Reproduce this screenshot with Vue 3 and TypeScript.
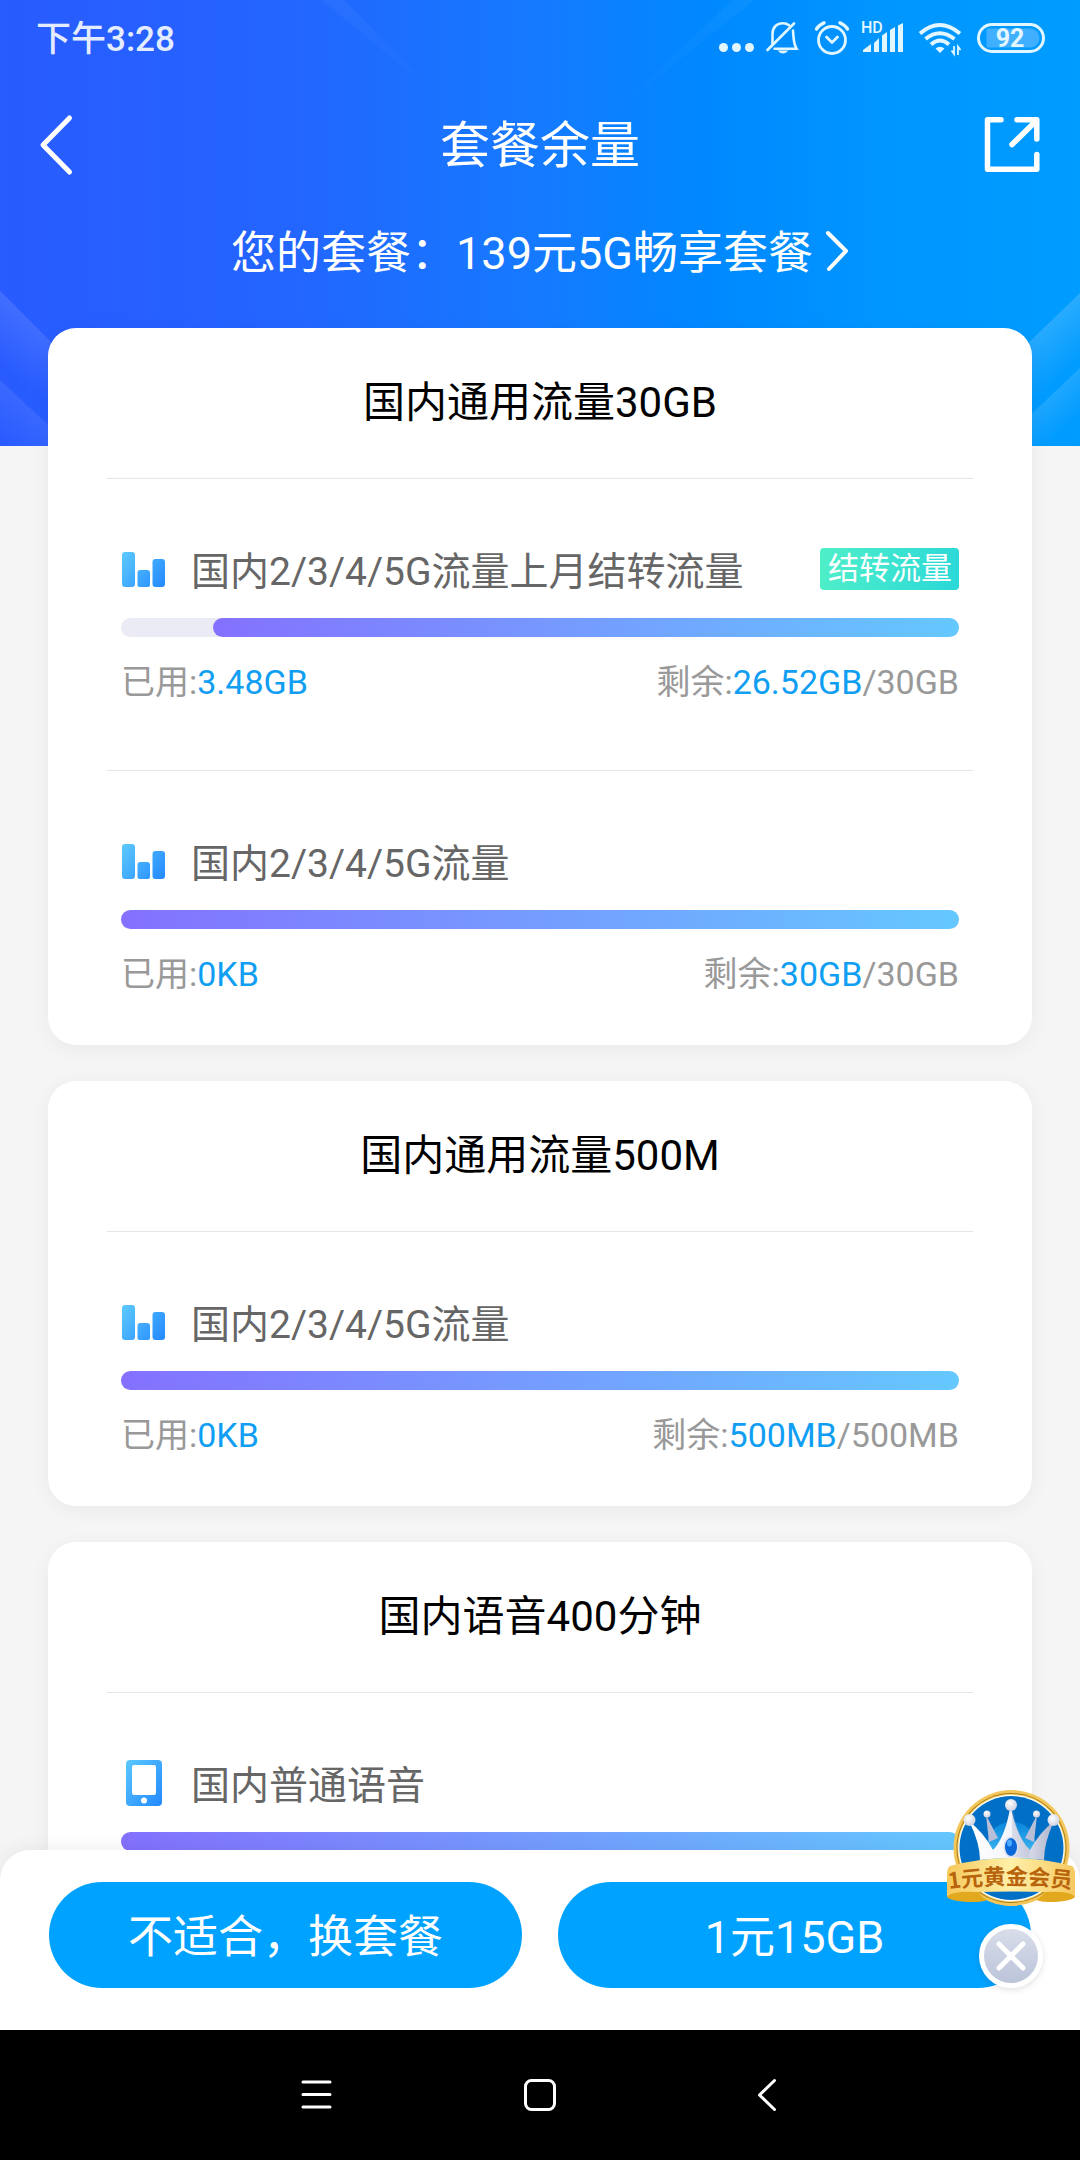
<script setup lang="ts">
interface Amounts {
  used: string
  left: string
  total: string
}

interface UsageItem {
  icon: 'chart' | 'phone'
  name: string
  tag?: string
  amounts?: Amounts
  percent: number
}

interface UsageGroup {
  title: string
  items: UsageItem[]
}

const groups: UsageGroup[] = [
  {
    title: '国内通用流量30GB',
    items: [
      {
        icon: 'chart',
        name: '国内2/3/4/5G流量上月结转流量',
        tag: '结转流量',
        amounts: { used: '3.48GB', left: '26.52GB', total: '30GB' },
        percent: 89,
      },
      {
        icon: 'chart',
        name: '国内2/3/4/5G流量',
        amounts: { used: '0KB', left: '30GB', total: '30GB' },
        percent: 100,
      },
    ],
  },
  {
    title: '国内通用流量500M',
    items: [
      {
        icon: 'chart',
        name: '国内2/3/4/5G流量',
        amounts: { used: '0KB', left: '500MB', total: '500MB' },
        percent: 100,
      },
    ],
  },
  {
    title: '国内语音400分钟',
    items: [{ icon: 'phone', name: '国内普通语音', percent: 100 }],
  },
]
</script>

<template>
  <div class="screen">
    <main class="content">
      <header class="hero">
        <svg class="rays" viewBox="0 0 1080 446" preserveAspectRatio="none" aria-hidden="true">
          <defs>
            <linearGradient id="rayL" gradientUnits="userSpaceOnUse" x1="0" y1="291" x2="-36" y2="336">
              <stop offset="0" stop-color="#fff" stop-opacity=".12" />
              <stop offset="1" stop-color="#fff" stop-opacity="0" />
            </linearGradient>
            <linearGradient id="rayL2" gradientUnits="userSpaceOnUse" x1="0" y1="380" x2="-30" y2="416">
              <stop offset="0" stop-color="#fff" stop-opacity=".08" />
              <stop offset="1" stop-color="#fff" stop-opacity="0" />
            </linearGradient>
            <linearGradient id="rayR" gradientUnits="userSpaceOnUse" x1="1080" y1="293" x2="1114" y2="330">
              <stop offset="0" stop-color="#fff" stop-opacity=".16" />
              <stop offset="1" stop-color="#fff" stop-opacity="0" />
            </linearGradient>
            <linearGradient id="rayR2" gradientUnits="userSpaceOnUse" x1="1080" y1="368" x2="1104" y2="394">
              <stop offset="0" stop-color="#fff" stop-opacity=".12" />
              <stop offset="1" stop-color="#fff" stop-opacity="0" />
            </linearGradient>
            <linearGradient id="rayT" x1="0" y1="0" x2="0" y2="1">
              <stop offset="0" stop-color="#fff" stop-opacity=".04" />
              <stop offset="1" stop-color="#fff" stop-opacity="0" />
            </linearGradient>
          </defs>
          <path d="M0 291L60 351V446H0z" fill="url(#rayL)" />
          <path d="M0 380L60 436V446H0z" fill="url(#rayL2)" />
          <path d="M1080 293L1020 351V446H1080z" fill="url(#rayR)" />
          <path d="M1080 368L1020 425V446H1080z" fill="url(#rayR2)" />
          <path d="M322 0H344L440 98z" fill="url(#rayT)" />
          <path d="M732 0H754L610 116z" fill="url(#rayT)" />
        </svg>

        <div class="status">
          <span class="time">下午3:28</span>
          <svg class="indicators" viewBox="0 0 328 40" fill="none" stroke="#e2f6ff" aria-hidden="true">
            <g fill="#e2f6ff" stroke="none">
              <circle cx="5.500" cy="28.500" r="4.500" />
              <circle cx="18.500" cy="28.500" r="4.500" />
              <circle cx="31.500" cy="28.500" r="4.500" />
            </g>
            <g stroke-width="2.600" stroke-linecap="round">
              <path d="M54.500 25V15C54.500 8 59 4.300 65 4.300C67.500 4.300 69.500 5 71 6.200" />
              <path d="M75 11.500C75.600 19 75.500 24 78 28.500L78.600 29.700H56.500" />
              <path d="M76 4.500L49.500 31" />
            </g>
            <path d="M59.500 31.500H70.500Q65 37.500 59.500 31.500z" fill="#e2f6ff" stroke="none" />
            <g stroke-width="2.800" stroke-linecap="round" stroke-linejoin="round">
              <circle cx="114" cy="21" r="13.500" />
              <path d="M108.500 18L114 23.500L119.500 18" />
              <path d="M98.500 10Q101.500 5.500 106 3.800M129.500 10Q126.500 5.500 122 3.800" stroke-width="3.400" />
            </g>
            <text x="143" y="14" class="hd">HD</text>
            <g fill="#e2f6ff" stroke="none">
              <path d="M145 33V31L153 25V33zM156 33V24L161 19V33zM164 33V16.500L169 13V33zM172 33V11L177 8V33zM180 33V6.500L185 4V33z" />
            </g>
            <g stroke-width="3.800">
              <path d="M202 14.500Q221.500 -2.500 242 14.500" />
              <path d="M207.500 20Q221.500 8.500 236.500 20" />
              <path d="M213 25.500Q222 17.500 231 25.500" />
            </g>
            <path d="M217.500 29.500Q222 26 226.500 29.500L222 34z" fill="#e2f6ff" stroke="none" />
            <path d="M236 27V35L233.500 31.500M240 36V27.500L242.500 31" stroke-width="1.800" />
            <rect x="260.500" y="5.500" width="65" height="27" rx="13.500" stroke-width="3" />
            <path d="M270 9.500H312A9.500 9.500 0 0 1 312 28.500H270Q268.500 28.500 268.500 27V11Q268.500 9.500 270 9.500z" fill="#40afff" stroke="none" />
            <text x="292" y="28" text-anchor="middle" class="level">92</text>
          </svg>
        </div>

        <nav class="navbar">
          <button type="button" class="icon-button" aria-label="返回">
            <svg viewBox="0 0 60 64" width="60" height="64" fill="none" stroke="#fff" stroke-width="5" stroke-linecap="round" stroke-linejoin="round">
              <path d="M31.500 6L5 33L31.500 60" />
            </svg>
          </button>
          <h1>套餐余量</h1>
          <button type="button" class="icon-button" aria-label="分享">
            <svg viewBox="0 0 60 60" width="60" height="60" fill="none" stroke="#fff" stroke-width="5.500" stroke-linecap="round" stroke-linejoin="round">
              <path d="M19 5.800H5.500V55.200H54.800V40.500" />
              <path d="M35 5.800H54.800V25M53 8L30 30.500" />
            </svg>
          </button>
        </nav>

        <a href="#plan" class="plan">
          <span>您的套餐：139元5G畅享套餐</span>
          <svg viewBox="0 0 24 42" width="24" height="42" fill="none" stroke="#fff" stroke-width="4" stroke-linecap="round" stroke-linejoin="round" aria-hidden="true">
            <path d="M3 3L21 21L4 39" />
          </svg>
        </a>
      </header>

      <div class="cards">
        <section v-for="group in groups" :key="group.title" class="card">
          <h2>{{ group.title }}</h2>
          <article v-for="item in group.items" :key="item.name" class="usage">
            <div class="row">
              <svg v-if="item.icon === 'chart'" class="glyph" viewBox="0 0 46 46" aria-hidden="true">
                <defs>
                  <linearGradient id="chartFill" gradientUnits="userSpaceOnUse" x1="2" y1="7" x2="44" y2="41">
                    <stop offset="0" stop-color="#5cc8ff" />
                    <stop offset="1" stop-color="#2389ff" />
                  </linearGradient>
                </defs>
                <path
                  fill="url(#chartFill)"
                  d="M4 6H11Q14 6 14 9V38Q14 41 11 41H4Q1 41 1 38V9Q1 6 4 6zM19 24H26Q29 24 29 27V39Q29 41 27 41H18.500Q16.500 41 16.500 39V27Q16.500 24 19 24zM34.500 13H41Q44 13 44 16V38Q44 41 41 41H34.500Q31.500 41 31.500 38V16Q31.500 13 34.500 13z"
                />
              </svg>
              <svg v-else class="glyph" viewBox="0 0 46 46" aria-hidden="true">
                <defs>
                  <linearGradient id="phoneFill" x1="0" y1="0" x2="1" y2="1">
                    <stop offset="0" stop-color="#5cc8ff" />
                    <stop offset="1" stop-color="#2389ff" />
                  </linearGradient>
                </defs>
                <rect x="5" y="0" width="36" height="46" rx="4" fill="url(#phoneFill)" />
                <rect x="11" y="5" width="24" height="30" rx="2" fill="#fff" />
                <circle cx="23" cy="40.500" r="3" fill="#fff" />
              </svg>
              <h3>{{ item.name }}</h3>
              <span v-if="item.tag" class="tag">{{ item.tag }}</span>
            </div>
            <div
              class="track"
              role="progressbar"
              :aria-label="item.name"
              :aria-valuenow="item.percent"
              aria-valuemin="0"
              aria-valuemax="100"
            >
              <div class="fill" :style="{ width: item.percent + '%' }"></div>
            </div>
            <div v-if="item.amounts" class="amounts">
              <span>已用:<b>{{ item.amounts.used }}</b></span>
              <span>剩余:<b>{{ item.amounts.left }}</b>/{{ item.amounts.total }}</span>
            </div>
          </article>
        </section>
      </div>
    </main>

    <footer class="sheet">
      <button type="button" class="action">不适合，换套餐</button>
      <button type="button" class="action">1元15GB</button>

      <aside class="promo">
        <a href="#gold" aria-label="1元黄金会员">
          <svg viewBox="0 0 130 120" width="130" height="120">
            <defs>
              <linearGradient id="gold" x1="0" y1="0" x2="1" y2="0">
                <stop offset="0" stop-color="#f6c95c" />
                <stop offset=".5" stop-color="#fff0a8" />
                <stop offset="1" stop-color="#f6c860" />
              </linearGradient>
              <linearGradient id="silver" x1="0" y1="0" x2="1" y2="0">
                <stop offset="0" stop-color="#fff" />
                <stop offset=".5" stop-color="#f4f5fb" />
                <stop offset="1" stop-color="#aeb4cc" />
              </linearGradient>
              <linearGradient id="dome" x1="0" y1="0" x2="0" y2="1">
                <stop offset="0" stop-color="#0a86dc" />
                <stop offset="1" stop-color="#4cc4f4" />
              </linearGradient>
              <radialGradient id="pearl" cx=".4" cy=".35" r=".7">
                <stop offset="0" stop-color="#fff" />
                <stop offset="1" stop-color="#c9cde0" />
              </radialGradient>
            </defs>
            <circle cx="65.500" cy="60" r="58" fill="#f3c65a" />
            <circle cx="65.500" cy="60" r="55" fill="#a87912" />
            <circle cx="65.500" cy="60" r="54" fill="#fbe08a" />
            <circle cx="65.500" cy="60" r="53" fill="#fff" />
            <circle cx="65.500" cy="60" r="52" fill="#006fc6" />
            <path d="M39 74Q39 34 65.500 34Q92 34 92 74z" fill="url(#dome)" />
            <path d="M40 27L43 54L52 50zM91 27L88 54L79 50z" fill="#b8bfd6" />
            <path d="M23 33Q38 45 47 62Q59 50 64.500 18Q71 50 84 62Q93 45 108 33Q98 55 98 72Q65 68 34 72Q34 55 23 33z" fill="url(#silver)" />
            <path d="M66 20Q72 50 84 62L83 70L66 69z" fill="#a8afc8" opacity=".35" />
            <circle cx="65" cy="17" r="6" fill="url(#pearl)" />
            <circle cx="23.500" cy="32" r="6" fill="url(#pearl)" />
            <circle cx="107.500" cy="32" r="6" fill="url(#pearl)" />
            <circle cx="41" cy="26" r="3.500" fill="url(#pearl)" />
            <circle cx="90.500" cy="26" r="3.500" fill="url(#pearl)" />
            <ellipse cx="65" cy="59" rx="7.500" ry="10.500" fill="#d8def0" />
            <ellipse cx="65" cy="59" rx="6" ry="9" fill="#0a68d8" />
            <ellipse cx="63.500" cy="55" rx="2.500" ry="3.500" fill="#4aa8ff" />
            <path d="M1 98V109Q6 114 28 114Q36 114 41 112Q34 108 29 100zM129 98V109Q124 114 102 114Q95 114 90 112Q97 108 102 100z" fill="#e2a81e" />
            <path d="M4 78Q65 62 126 78Q129 80 129 86V109Q125 103 100 104Q65 103 30 104Q5 103 1 109V86Q1 80 4 78z" fill="url(#gold)" />
            <path id="promoArc" d="M3 101Q65 92 130 101" fill="none" />
            <text class="promo-text"><textPath href="#promoArc">1元黄金会员</textPath></text>
          </svg>
        </a>
        <button type="button" class="close" aria-label="关闭">
          <svg viewBox="0 0 30 30" width="30" height="30" stroke="#fff" stroke-width="5" stroke-linecap="round" aria-hidden="true">
            <path d="M3 3L27 27M27 3L3 27" />
          </svg>
        </button>
      </aside>
    </footer>

    <nav class="system" aria-label="系统导航">
      <button type="button" aria-label="菜单">
        <svg viewBox="0 0 36 36" width="36" height="36" stroke="#fff" stroke-width="3" stroke-linecap="round">
          <path d="M5 5H32M5 17.500H32M5 30H32" />
        </svg>
      </button>
      <button type="button" aria-label="主屏幕">
        <svg viewBox="0 0 36 36" width="36" height="36" fill="none" stroke="#fff" stroke-width="3">
          <rect x="3.500" y="3.500" width="29" height="29" rx="6" />
        </svg>
      </button>
      <button type="button" aria-label="返回">
        <svg viewBox="0 0 36 36" width="36" height="36" fill="none" stroke="#fff" stroke-width="3" stroke-linecap="round" stroke-linejoin="round">
          <path d="M28.500 3.500L13.500 18L28.500 32.500" />
        </svg>
      </button>
    </nav>
  </div>
</template>

<style>
body {
  background: #f5f5f5;
}
</style>

<style scoped>
.screen {
  display: flex;
  flex-direction: column;
  height: 100vh;
  font-family: Roboto, "Noto Sans CJK SC", sans-serif;
  background: #f5f5f5;
}

h1,
h2,
h3 {
  margin: 0;
  font-weight: 400;
}

button {
  padding: 0;
  border: 0;
  background: none;
  font: inherit;
  color: inherit;
}

svg {
  display: block;
}

.content {
  flex: 1;
  min-height: 0;
  overflow-y: auto;
  scrollbar-width: none;
}

.hero {
  position: relative;
  padding-bottom: 154px;
  color: #fff;
  background: linear-gradient(90deg, #295bff 0%, #2464ff 25%, #157aff 50%, #0088ff 65%, #0096ff 82%, #009cff 100%);
}

.rays {
  position: absolute;
  inset: 0;
  width: 100%;
  height: 100%;
}

.status {
  position: relative;
  display: flex;
  align-items: center;
  justify-content: space-between;
  height: 78px;
  padding: 0 34px 0 36px;
}

.time {
  padding-bottom: 8px;
  font-size: 35px;
  font-weight: 500;
  color: #e4ecff;
}

.indicators {
  width: 328px;
  height: 40px;
}

.hd {
  font-size: 16px;
  font-weight: 500;
  fill: #e2f6ff;
  stroke: none;
}

.level {
  font-size: 25px;
  font-weight: 700;
  fill: #e2f6ff;
  stroke: none;
}

.navbar {
  position: relative;
  display: flex;
  align-items: center;
  justify-content: space-between;
  height: 132px;
  padding: 0 38px;
}

.navbar h1 {
  padding-top: 4px;
  font-size: 50px;
  line-height: 72px;
}

.plan {
  position: relative;
  display: flex;
  align-items: center;
  justify-content: center;
  gap: 12px;
  height: 82px;
  font-size: 45px;
  color: #fff;
  text-decoration: none;
}

.plan span {
  padding-bottom: 4px;
}

.cards {
  position: relative;
  display: flex;
  flex-direction: column;
  gap: 36px;
  margin-top: -118px;
  padding: 0 48px 60px;
}

.card {
  padding: 0 59px;
  border-radius: 28px;
  background: #fff;
  box-shadow: 0 4px 20px rgba(0, 0, 0, 0.05);
}

.card h2 {
  font-size: 42px;
  line-height: 150px;
  text-align: center;
  color: #000;
}

.usage {
  padding: 62px 14px 46px;
  border-top: 1px solid #e6e6e6;
}

.usage:not(:last-child) {
  padding-bottom: 63px;
}

.row {
  display: flex;
  align-items: center;
  height: 60px;
}

.glyph {
  width: 46px;
  height: 46px;
  margin: 0 24px 4px 0;
}

.row h3 {
  padding-top: 2px;
  font-size: 39px;
  line-height: 60px;
  color: #666;
}

.tag {
  margin: 0 0 4px auto;
  padding: 0 7px 0 8px;
  border-radius: 4px;
  font-size: 31px;
  line-height: 42px;
  color: #fff;
  background: linear-gradient(100deg, #4fefc8, #2ad8d8);
}

.track {
  display: flex;
  justify-content: flex-end;
  height: 19px;
  margin-top: 17px;
  border-radius: 10px;
  background: #ebebf5;
}

.fill {
  border-radius: 10px;
  background: linear-gradient(90deg, #8471ff, #65c8ff);
}

.amounts {
  display: flex;
  justify-content: space-between;
  margin-top: 22px;
  font-size: 34px;
  line-height: 46px;
  padding-bottom: 2px;
  color: #999;
}

.amounts b {
  font-weight: 400;
  color: #0f9ef2;
}

.sheet {
  position: relative;
  display: flex;
  gap: 36px;
  margin-top: -40px;
  padding: 32px 49px 42px;
  border-radius: 30px 30px 0 0;
  background: #fff;
  box-shadow: 0 0 20px rgba(0, 0, 0, 0.08);
}

.action {
  flex: 1;
  height: 106px;
  padding-bottom: 4px;
  border-radius: 53px;
  font-size: 45px;
  color: #fff;
  background: #00a2ff;
}

.promo {
  position: absolute;
  top: -62px;
  right: 4px;
  display: flex;
  flex-direction: column;
  align-items: center;
  gap: 16px;
}

.promo-text {
  font-family: "Noto Sans CJK SC", sans-serif;
  font-size: 22px;
  font-weight: 700;
  fill: #b8640c;
}

.close {
  display: flex;
  align-items: center;
  justify-content: center;
  width: 64px;
  height: 64px;
  border: 5px solid #fff;
  border-radius: 50%;
  background: linear-gradient(#d8dde9, #bcc4da);
  box-shadow: 0 2px 6px rgba(0, 0, 0, 0.12);
}

.system {
  display: flex;
  align-items: center;
  justify-content: center;
  gap: 188px;
  height: 130px;
  background: #000;
}
</style>
